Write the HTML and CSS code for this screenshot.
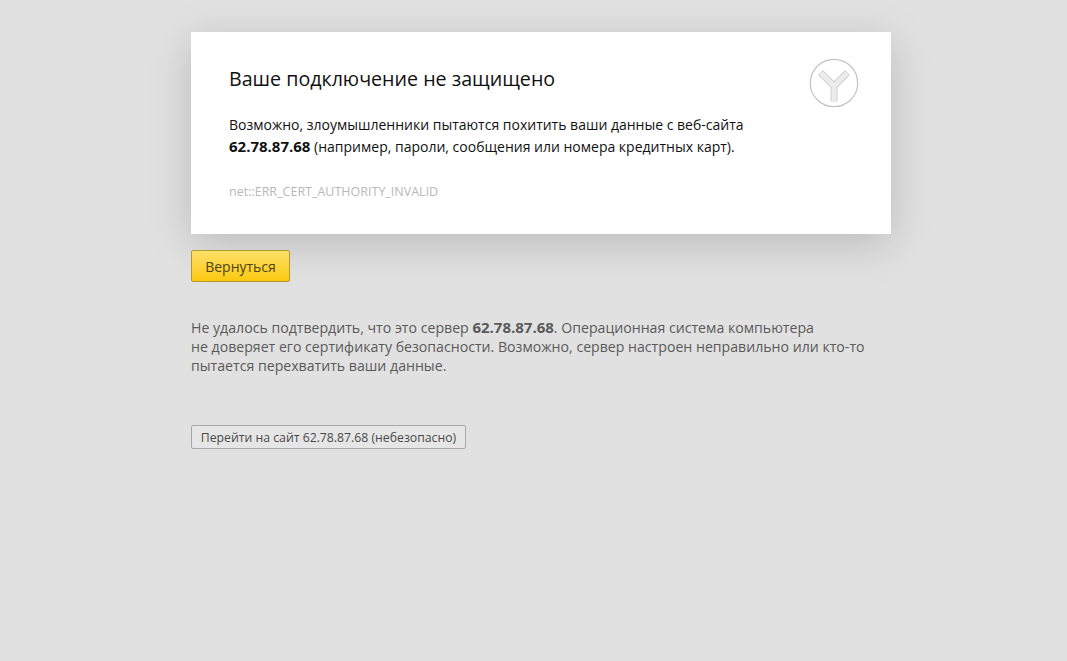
FILE: index.html
```html
<!DOCTYPE html>
<html lang="ru">
<head>
  <meta charset="UTF-8" />
  <title>Ошибка подключения</title>
  <link rel="stylesheet" href="styles.css">
</head>
<body>
  <div class="page">
    <div class="card">
      <div class="card-text">
        <h1 class="title">Ваше подключение не защищено</h1>
        <p class="lead">Возможно, злоумышленники пытаются похитить ваши данные с веб-сайта<br>
          <strong>62.78.87.68</strong> (например, пароли, сообщения или номера кредитных карт).</p>
        <p class="code">net::ERR_CERT_AUTHORITY_INVALID</p>
      </div>
      <svg class="logo" width="50" height="50" viewBox="0 0 50 50">
        <circle cx="25" cy="25" r="23.7" fill="#fff" stroke="#c4c4c4" stroke-width="1.2"/>
        <path d="M25 43.5V28L11.5 14.5M25 28L38.5 14.5" fill="none" stroke="#cfcfcf" stroke-width="7" stroke-linejoin="miter"/>
        <path d="M25 43V28L12 15M25 28L38 15" fill="none" stroke="#ececec" stroke-width="5" stroke-linejoin="miter"/>
      </svg>
    </div>
    <button class="btn-back">Вернуться</button>
    <p class="details">Не удалось подтвердить, что это сервер <strong>62.78.87.68</strong>. Операционная система компьютера<br>
      не доверяет его сертификату безопасности. Возможно, сервер настроен неправильно или кто-то<br>
      пытается перехватить ваши данные.</p>
    <button class="btn-proceed">Перейти на сайт 62.78.87.68 (небезопасно)</button>
  </div>
</body>
</html>
```

FILE: styles.css
```css
html, body {
  margin: 0;
  padding: 0;
  height: 100%;
}
body {
  background: #e1e1e1;
  font-family: "Open Sans", "Noto Sans", sans-serif;
  overflow: hidden;
}

.page {
  width: 700px;
  margin-left: 191px;
  padding-top: 32px;
}

/* Card */
.card {
  display: flex;
  justify-content: space-between;
  align-items: flex-start;
  height: 202px;
  box-sizing: border-box;
  padding: 26px 32px 0 38px;
  background: #fff;
  box-shadow: 0 10px 40px rgba(0,0,0,0.17);
}
.title {
  margin: 7px 0 0;
  font-size: 19.65px;
  font-weight: 400;
  line-height: 28px;
  color: #111;
}
.lead {
  margin: 22px 0 0;
  font-size: 14px;
  line-height: 20.5px;
  color: #111;
}
.lead strong,
.details strong {
  font-size: 15px;
}
.code {
  margin: 26px 0 0;
  font-size: 12.5px;
  line-height: 18px;
  color: #b8b8b8;
}
.logo { flex: none; }

/* Buttons */
.btn-back {
  display: block;
  width: 99px;
  height: 32px;
  margin-top: 16px;
  padding: 0;
  font: 14px "Open Sans", "Noto Sans", sans-serif;
  color: #4c4318;
  background: linear-gradient(#fde06a, #fdc90f);
  border: 1px solid #b3972f;
  border-radius: 2px;
}
.details {
  margin: 36px 0 0;
  font-size: 14.13px;
  line-height: 19px;
  color: #5a5a5a;
}
.btn-proceed {
  display: block;
  width: 275px;
  height: 24px;
  margin-top: 50px;
  padding: 0;
  font: 12.25px "Open Sans", "Noto Sans", sans-serif;
  color: #4a4a4a;
  background: #e6e6e6;
  border: 1px solid #a8a8a8;
  border-radius: 2px;
}
```
